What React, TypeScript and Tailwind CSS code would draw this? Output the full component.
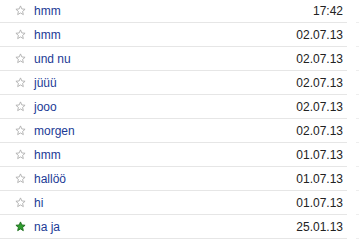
const ROWS = [
  { title: 'hmm', date: '17:42', starred: false },
  { title: 'hmm', date: '02.07.13', starred: false },
  { title: 'und nu', date: '02.07.13', starred: false },
  { title: 'jüüü', date: '02.07.13', starred: false },
  { title: 'jooo', date: '02.07.13', starred: false },
  { title: 'morgen', date: '02.07.13', starred: false },
  { title: 'hmm', date: '01.07.13', starred: false },
  { title: 'hallöö', date: '01.07.13', starred: false },
  { title: 'hi', date: '01.07.13', starred: false },
  { title: 'na ja', date: '25.01.13', starred: true },
];

function Star({ on }: { on: boolean }) {
  return (
    <svg width="11" height="11" viewBox="0 0 24 24" className="shrink-0">
      <polygon
        points="12,2 14.9,8.6 22,9.3 16.6,14 18.2,21 12,17.3 5.8,21 7.4,14 2,9.3 9.1,8.6"
        fill={on ? '#2f9e2f' : '#ffffff'}
        stroke={on ? '#1d6b1d' : '#b0b0b0'}
        strokeWidth="2"
        strokeLinejoin="round"
      />
    </svg>
  );
}

export default function App() {
  return (
    <div className="w-[359px] h-[248px] bg-white overflow-hidden font-['Liberation_Sans',Arial,sans-serif] text-[12px]">
      <div className="-mt-px">
        {ROWS.map((row, i) => (
          <div key={i} className="flex">
            <div className="w-[347px] h-6 flex items-center border-b border-[#e6e6e6]">
              <div className="w-[34px] flex justify-end pr-[8px]">
                <Star on={row.starred} />
              </div>
              <span className="flex-1 text-[#1b3a96]">{row.title}</span>
              <span className="pr-[4px] text-[#222]">{row.date}</span>
            </div>
            <div className="ml-[9px] w-[3px] h-6 border-b border-[#eeeeee]" />
          </div>
        ))}
      </div>
    </div>
  );
}
